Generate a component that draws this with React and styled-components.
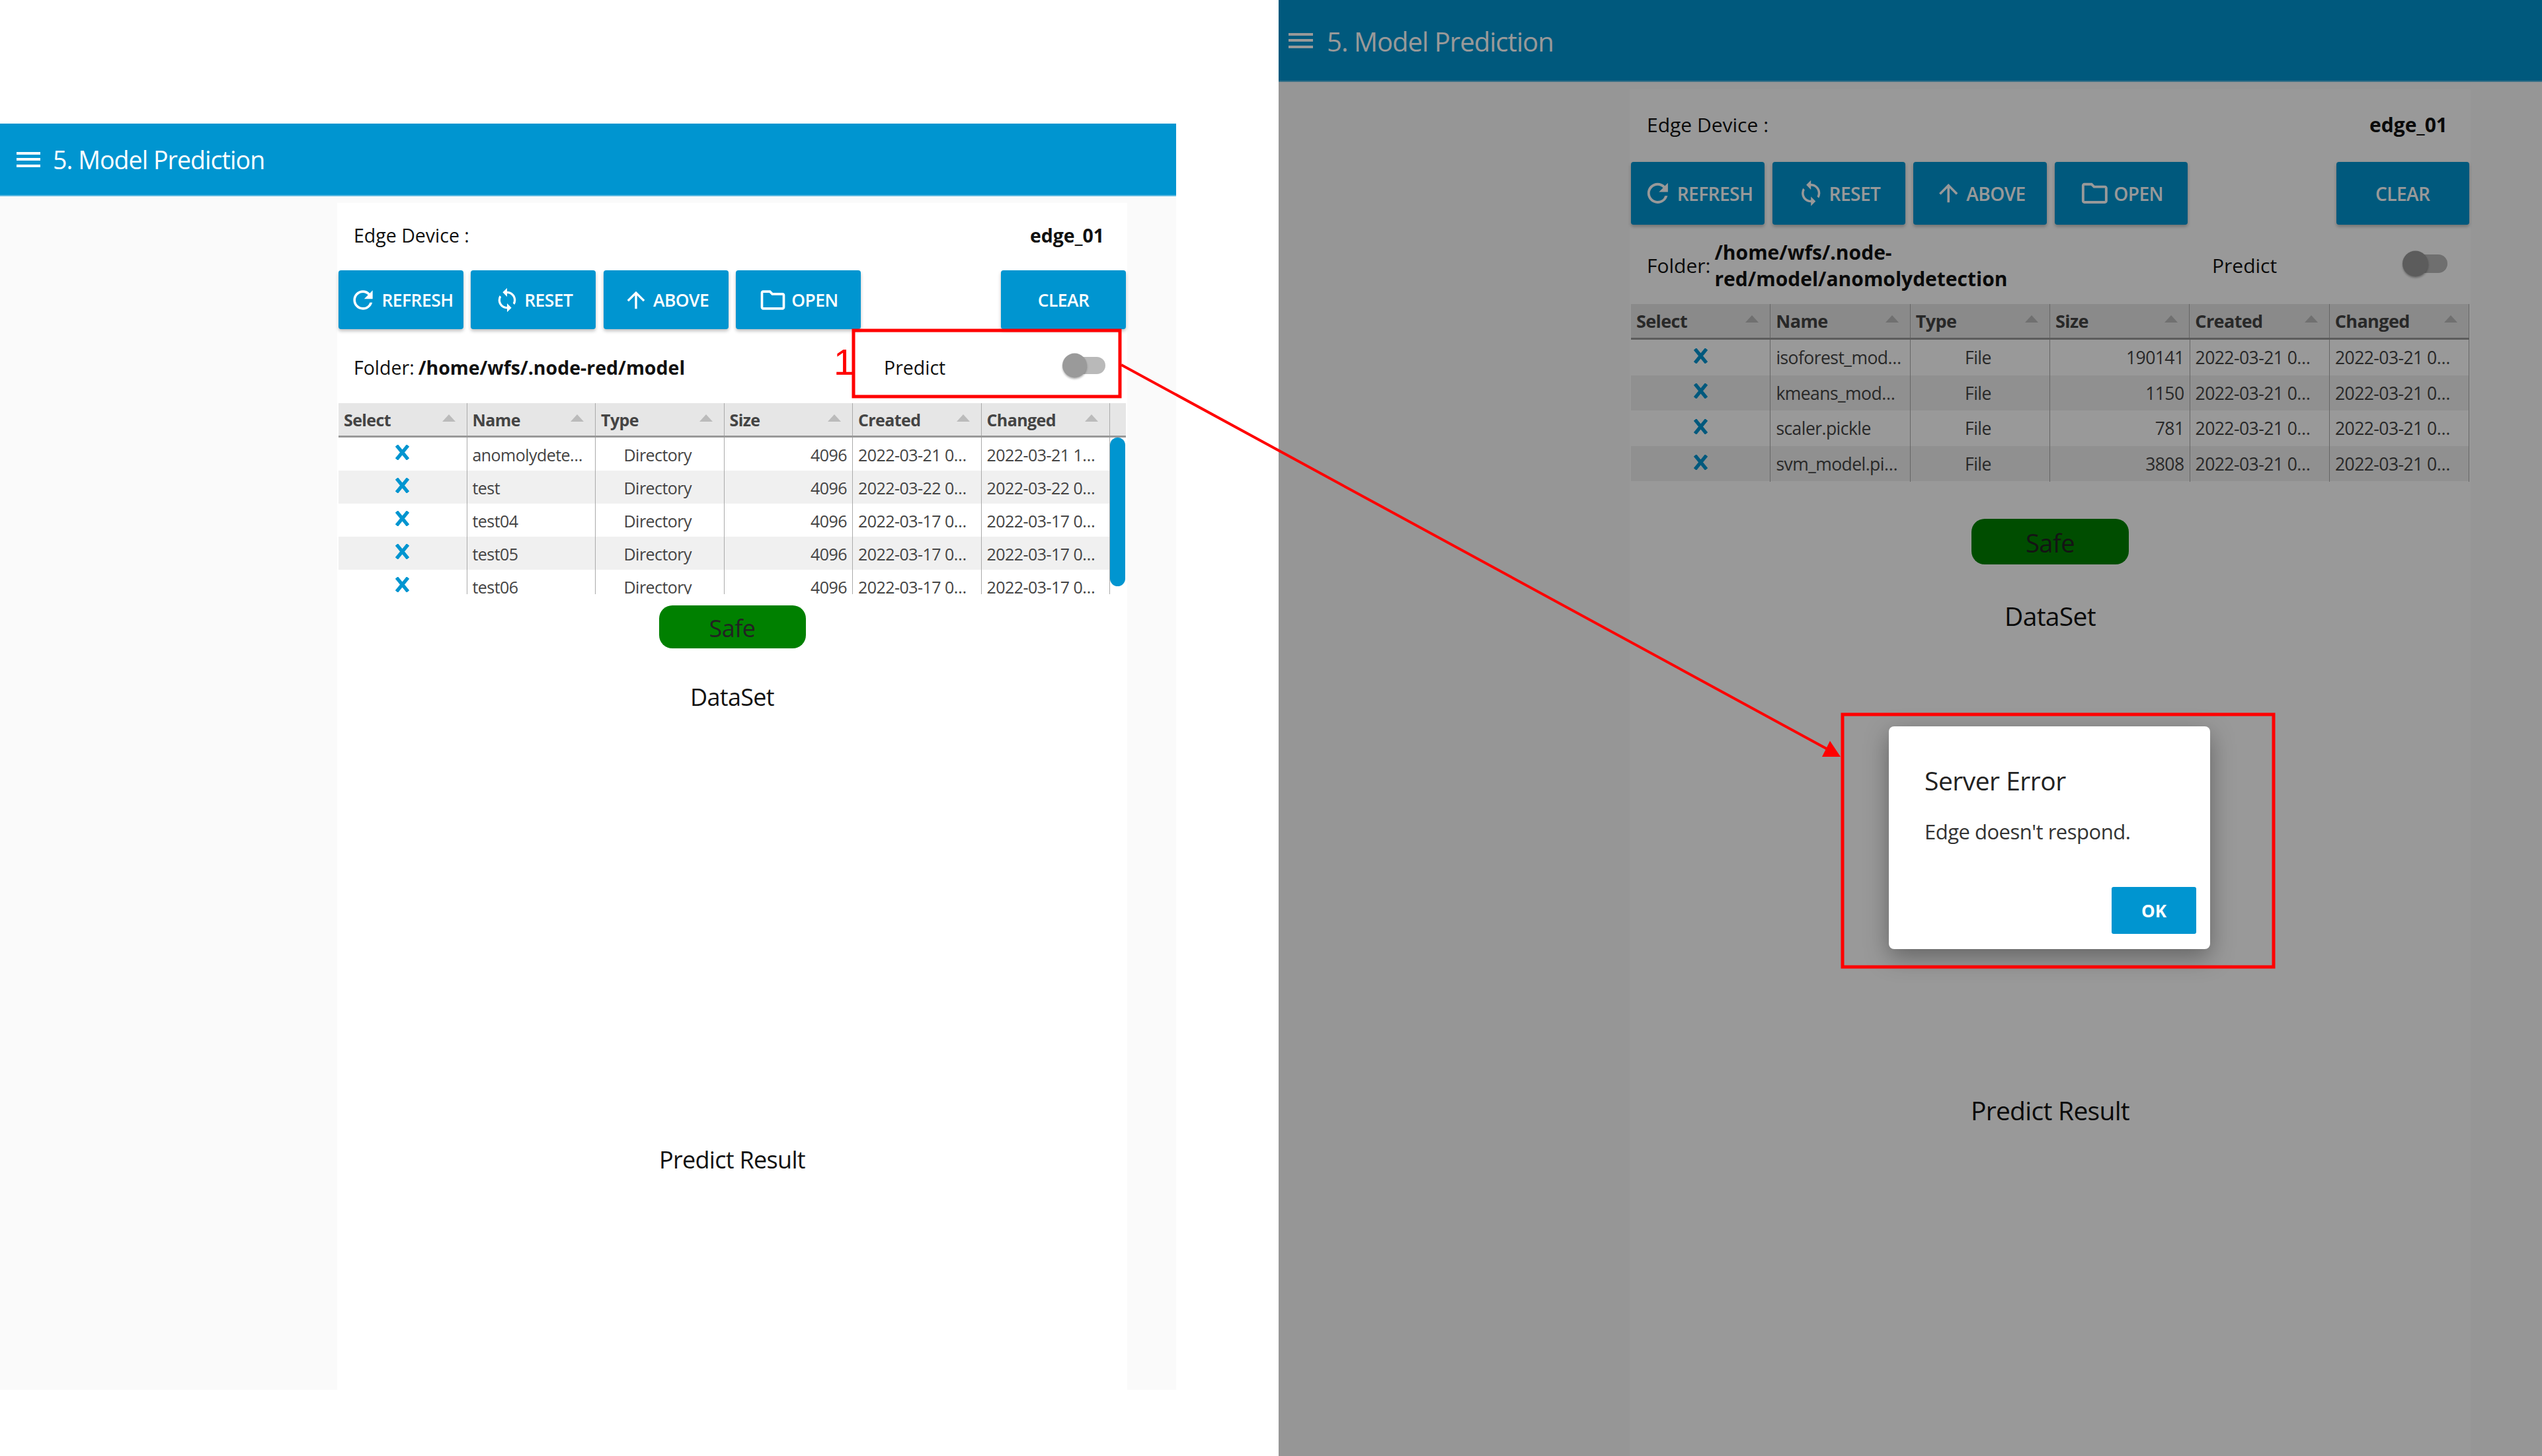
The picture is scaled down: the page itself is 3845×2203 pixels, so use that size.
import React from 'react';
import styled, { createGlobalStyle, ThemeProvider } from 'styled-components';
import { MdRefresh, MdSync, MdArrowUpward, MdOutlineFolder } from 'react-icons/md';

const FONT = '"Open Sans", "Noto Sans", sans-serif';

const leftTheme = {
  headerH: 110, headerPad: 25, titleGap: 19, title: 37.5, titleTop: 0, burger: 36,
  padLeft: 510, padRight: 74, sheetTop: 10,
  edgeH: 102, edgePad: 25, edgeRight: 35, text: 28.5,
  btnH: 89, btnW: 189, btnGap: 11.3, btnFont: 26.4,
  folderH: 112, predictPad: 33, folderW: 802,
  headH: 50, rowH: 50, cols: 194.5, scroll: 23, bodyH: 237, cellFont: 25, headFont: 25,
  safeTop: 17, safeW: 222, safeH: 65, safeFont: 36, dataTop: 52, big: 36, resultTop: 656,
  thumb: 37, trackW: 57, trackH: 26,
};

const rightTheme = {
  headerH: 124, headerPad: 15, titleGap: 21, title: 40, titleTop: 3, burger: 37,
  padLeft: 531, padRight: 108, sheetTop: 11,
  edgeH: 110, edgePad: 26, edgeRight: 35, text: 30,
  btnH: 95, btnW: 201.5, btnGap: 12, btnFont: 28,
  folderH: 120, predictPad: 35, folderW: 855,
  headH: 52, rowH: 53.6, cols: 211.4, scroll: 0, bodyH: 215, cellFont: 26.5, headFont: 27,
  safeTop: 56, safeW: 238, safeH: 69, safeFont: 38, dataTop: 56, big: 39, resultTop: 704,
  thumb: 39, trackW: 60, trackH: 28,
};

const GlobalStyle = createGlobalStyle`
  html, body { margin: 0; padding: 0; background: #fff; }
  body { font-family: ${FONT}; color: #111; }
  * { box-sizing: border-box; }
`;

const Page = styled.div`
  position: relative;
  width: 3845px;
  height: 2203px;
  display: flex;
  overflow: hidden;
  background: #fff;
`;

const LeftArea = styled.div`
  width: 1934px;
  padding-top: 187px;
`;

const LeftFrame = styled.div`
  width: 1779px;
  height: 1916px;
`;

const RightArea = styled.div`
  position: relative;
  width: 1911px;
  height: 2203px;
  overflow: hidden;
`;

const Screen = styled.div`
  display: flex;
  flex-direction: column;
  height: 100%;
  background: #fafafa;
`;

const Header = styled.header`
  flex: none;
  height: ${(p) => p.theme.headerH}px;
  display: flex;
  align-items: center;
  padding-left: ${(p) => p.theme.headerPad}px;
  gap: ${(p) => p.theme.titleGap}px;
  background: #0095d0;
  border-bottom: 2px solid #5db9e0;
  color: #fff;
`;

const Burger = styled.span`
  width: ${(p) => p.theme.burger}px;
  height: 23px;
  border-top: 4px solid #fff;
  border-bottom: 4px solid #fff;
  position: relative;
  &::after {
    content: '';
    position: absolute;
    left: 0;
    right: 0;
    top: 5.5px;
    height: 4px;
    background: #fff;
  }
`;

const Title = styled.span`
  padding-top: ${(p) => p.theme.titleTop}px;
  font-size: ${(p) => p.theme.title}px;
  letter-spacing: -0.95px;
`;

const Main = styled.main`
  flex: 1;
  display: flex;
  padding: ${(p) => p.theme.sheetTop}px ${(p) => p.theme.padRight}px 0 ${(p) => p.theme.padLeft}px;
`;

const Sheet = styled.div`
  flex: 1;
  min-width: 0;
  display: flex;
  flex-direction: column;
  background: #fff;
`;

const EdgeRow = styled.div`
  flex: none;
  height: ${(p) => p.theme.edgeH}px;
  display: flex;
  align-items: center;
  justify-content: space-between;
  padding: 0 ${(p) => p.theme.edgeRight}px 4px ${(p) => p.theme.edgePad}px;
  font-size: ${(p) => p.theme.text}px;
`;

const Strong = styled.b`
  font-weight: 700;
`;

const Toolbar = styled.div`
  flex: none;
  display: flex;
  gap: ${(p) => p.theme.btnGap}px;
  padding: 0 2px;
`;

const Button = styled.button`
  width: ${(p) => p.theme.btnW}px;
  height: ${(p) => p.theme.btnH}px;
  margin-left: ${(p) => (p.$push ? 'auto' : '0')};
  display: flex;
  align-items: center;
  justify-content: center;
  gap: 6px;
  padding: 0;
  border: 0;
  border-radius: 4px;
  background: #0095d0;
  color: #fff;
  font-family: ${FONT};
  font-weight: 600;
  font-size: ${(p) => p.theme.btnFont}px;
  letter-spacing: -0.5px;
  box-shadow: 0 3px 5px rgba(0, 0, 0, 0.25);
  svg {
    flex: none;
  }
`;

const FolderRow = styled.div`
  flex: none;
  height: ${(p) => p.theme.folderH}px;
  display: flex;
  align-items: center;
  padding-top: 3px;
  padding-left: ${(p) => p.theme.edgePad}px;
  padding-right: ${(p) => p.theme.predictPad}px;
  font-size: ${(p) => p.theme.text}px;
`;

const Folder = styled.div`
  flex: none;
  width: ${(p) => p.theme.folderW}px;
  display: flex;
  align-items: center;
  gap: 6px;
`;

const PathLine = styled.b`
  display: block;
  font-weight: 700;
  line-height: 40px;
  white-space: nowrap;
`;

const Predict = styled.div`
  flex: 1;
  display: flex;
  align-items: center;
  justify-content: space-between;
`;

const Toggle = styled.span`
  position: relative;
  display: block;
  width: ${(p) => p.theme.trackW}px;
  height: ${(p) => p.theme.trackH}px;
  border-radius: 14px;
  background: #b9b9b9;
  margin-top: -6px;
  &::before {
    content: '';
    position: absolute;
    left: -8px;
    top: 50%;
    width: ${(p) => p.theme.thumb}px;
    height: ${(p) => p.theme.thumb}px;
    transform: translateY(-50%);
    border-radius: 50%;
    background: #9a9a9a;
    box-shadow: 0 2px 3px rgba(0, 0, 0, 0.3);
  }
`;

const Table = styled.div`
  flex: none;
  padding: 0 2px;
`;

const HeadRow = styled.div`
  display: flex;
  height: ${(p) => p.theme.headH + 2}px;
  background: #e6e6e6;
  border-bottom: 3px solid #999;
`;

const HeadCell = styled.div`
  position: relative;
  width: ${(p) => p.theme.cols}px;
  display: flex;
  align-items: center;
  padding-left: 8px;
  border-right: 1.5px solid #aaa;
  color: #444;
  font-weight: 700;
  font-size: ${(p) => p.theme.headFont}px;
  letter-spacing: -0.6px;
  &::after {
    content: '';
    position: absolute;
    right: 17px;
    top: 17px;
    border-left: 10px solid transparent;
    border-right: 10px solid transparent;
    border-bottom: 11px solid #bbb;
  }
`;

const Gutter = styled.div`
  width: ${(p) => p.theme.scroll}px;
`;

const BodyFrame = styled.div`
  display: flex;
  height: ${(p) => p.theme.bodyH}px;
  overflow: hidden;
`;

const Rows = styled.div`
  flex: none;
`;

const Row = styled.div`
  display: flex;
  height: ${(p) => p.theme.rowH}px;
  background: ${(p) => (p.$odd ? '#f0f0f0' : '#fff')};
`;

const cellPad = { left: 18, center: 14, right: 8 };

const Cell = styled.div`
  width: ${(p) => p.theme.cols}px;
  height: ${(p) => p.theme.rowH + 1}px;
  padding: 0 ${(p) => cellPad[p.$align || 'left']}px 0 8px;
  border-right: 1.5px solid #aaa;
  color: #444;
  font-size: ${(p) => p.theme.cellFont}px;
  line-height: ${(p) => p.theme.rowH + 2}px;
  letter-spacing: -0.55px;
  text-align: ${(p) => p.$align || 'left'};
  white-space: nowrap;
  overflow: hidden;
  text-overflow: ellipsis;
`;

const NameCell = styled(Cell)`
  padding-right: 12px;
`;

const SelectCell = styled(Cell)`
  display: flex;
  align-items: center;
  justify-content: center;
  padding: 0 0 6px;
`;

const RemoveIcon = styled.svg`
  width: 25px;
  height: 23px;
  stroke: #0095d0;
  stroke-width: 5.5;
  fill: none;
`;

const Scrollbar = styled.div`
  flex: none;
  width: ${(p) => p.theme.scroll}px;
  height: 225px;
  border-radius: 12px;
  background: #0095d0;
`;

const Safe = styled.div`
  flex: none;
  align-self: center;
  width: ${(p) => p.theme.safeW}px;
  height: ${(p) => p.theme.safeH}px;
  margin-top: ${(p) => p.theme.safeTop}px;
  padding-top: 3px;
  display: flex;
  align-items: center;
  justify-content: center;
  border-radius: 20px;
  background: #008000;
  color: #222;
  font-size: ${(p) => p.theme.safeFont}px;
  letter-spacing: -0.5px;
`;

const Caption = styled.div`
  flex: none;
  text-align: center;
  margin-top: ${(p) => (p.$result ? p.theme.resultTop : p.theme.dataTop)}px;
  font-size: ${(p) => p.theme.big}px;
  font-weight: 500;
  letter-spacing: -0.7px;
  line-height: 44px;
`;

const Overlay = styled.div`
  position: absolute;
  inset: 0;
  padding: 1099px 0 0 923px;
  background: rgba(0, 0, 0, 0.4);
`;

const Dialog = styled.div`
  width: 486px;
  height: 337px;
  display: flex;
  flex-direction: column;
  padding: 58px 21px 23px 54px;
  border-radius: 8px;
  background: #fff;
  box-shadow: 0 12px 36px rgba(0, 0, 0, 0.35);
`;

const DialogTitle = styled.div`
  font-size: 39px;
  font-weight: 500;
  letter-spacing: -0.5px;
  line-height: 48px;
  color: #222;
`;

const DialogText = styled.div`
  margin-top: 33px;
  font-size: 31px;
  letter-spacing: -0.5px;
  line-height: 40px;
  color: #333;
`;

const OkButton = styled.button`
  align-self: flex-end;
  margin-top: auto;
  width: 128px;
  height: 71px;
  border: 0;
  border-radius: 3px;
  background: #0095d0;
  color: #fff;
  font-family: ${FONT};
  font-weight: 700;
  font-size: 26px;
`;

const Annotations = styled.svg`
  position: absolute;
  inset: 0;
  pointer-events: none;
`;

const Marker = styled.span`
  position: absolute;
  left: 1261px;
  top: 516px;
  color: #ff0000;
  font-family: "Liberation Sans", sans-serif;
  font-size: 56px;
  line-height: 64px;
`;

const columns = ['Select', 'Name', 'Type', 'Size', 'Created', 'Changed'];

const directories = [
  { name: 'anomolydetection', type: 'Directory', size: 4096, created: '2022-03-21 09:12:44', changed: '2022-03-21 16:03:20' },
  { name: 'test', type: 'Directory', size: 4096, created: '2022-03-22 09:31:02', changed: '2022-03-22 09:31:02' },
  { name: 'test04', type: 'Directory', size: 4096, created: '2022-03-17 09:20:11', changed: '2022-03-17 09:20:11' },
  { name: 'test05', type: 'Directory', size: 4096, created: '2022-03-17 09:24:38', changed: '2022-03-17 09:24:38' },
  { name: 'test06', type: 'Directory', size: 4096, created: '2022-03-17 09:28:50', changed: '2022-03-17 09:28:50' },
];

const models = [
  { name: 'isoforest_model.pickle', type: 'File', size: 190141, created: '2022-03-21 09:12:44', changed: '2022-03-21 09:12:44' },
  { name: 'kmeans_model.pickle', type: 'File', size: 1150, created: '2022-03-21 09:12:44', changed: '2022-03-21 09:12:44' },
  { name: 'scaler.pickle', type: 'File', size: 781, created: '2022-03-21 09:12:44', changed: '2022-03-21 09:12:44' },
  { name: 'svm_model.pickle', type: 'File', size: 3808, created: '2022-03-21 09:12:44', changed: '2022-03-21 09:12:44' },
];

const ModelPrediction = ({ path, files, scrollable }) => (
  <Screen>
    <Header>
      <Burger />
      <Title>5. Model Prediction</Title>
    </Header>
    <Main>
      <Sheet>
        <EdgeRow>
          <span>Edge Device :</span>
          <Strong>edge_01</Strong>
        </EdgeRow>
        <Toolbar>
          <Button><MdRefresh size="1.667em" />REFRESH</Button>
          <Button><MdSync size="1.515em" />RESET</Button>
          <Button><MdArrowUpward size="1.515em" />ABOVE</Button>
          <Button><MdOutlineFolder size="1.667em" />OPEN</Button>
          <Button $push>CLEAR</Button>
        </Toolbar>
        <FolderRow>
          <Folder>
            <span>Folder:</span>
            <div>
              {path.map((line) => <PathLine key={line}>{line}</PathLine>)}
            </div>
          </Folder>
          <Predict>
            <span>Predict</span>
            <Toggle />
          </Predict>
        </FolderRow>
        <Table>
          <HeadRow>
            {columns.map((col) => <HeadCell key={col}>{col}</HeadCell>)}
            {scrollable && <Gutter />}
          </HeadRow>
          <BodyFrame>
            <Rows>
              {files.map((file, i) => (
                <Row key={file.name} $odd={i % 2 === 1}>
                  <SelectCell>
                    <RemoveIcon viewBox="0 0 24 24"><path d="M3 1 L21 23 M21 1 L3 23" /></RemoveIcon>
                  </SelectCell>
                  <NameCell>{file.name}</NameCell>
                  <Cell $align="center">{file.type}</Cell>
                  <Cell $align="right">{file.size}</Cell>
                  <Cell>{file.created}</Cell>
                  <Cell>{file.changed}</Cell>
                </Row>
              ))}
            </Rows>
            {scrollable && <Scrollbar />}
          </BodyFrame>
        </Table>
        <Safe>Safe</Safe>
        <Caption>DataSet</Caption>
        <Caption $result>Predict Result</Caption>
      </Sheet>
    </Main>
  </Screen>
);

const App = () => (
  <Page>
    <GlobalStyle />
    <LeftArea>
      <LeftFrame>
        <ThemeProvider theme={leftTheme}>
          <ModelPrediction path={['/home/wfs/.node-red/model']} files={directories} scrollable />
        </ThemeProvider>
      </LeftFrame>
    </LeftArea>
    <RightArea>
      <ThemeProvider theme={rightTheme}>
        <ModelPrediction path={['/home/wfs/.node-', 'red/model/anomolydetection']} files={models} />
      </ThemeProvider>
      <Overlay>
        <Dialog>
          <DialogTitle>Server Error</DialogTitle>
          <DialogText>Edge doesn't respond.</DialogText>
          <OkButton>OK</OkButton>
        </Dialog>
      </Overlay>
    </RightArea>
    <Annotations width="3845" height="2203" viewBox="0 0 3845 2203">
      <rect x="1291" y="500" width="403" height="100" fill="none" stroke="#ff0000" strokeWidth="5" />
      <rect x="2787" y="1081" width="652" height="382" fill="none" stroke="#ff0000" strokeWidth="5" />
      <line x1="1696" y1="552" x2="2765" y2="1134" stroke="#ff0000" strokeWidth="4" />
      <polygon points="2784,1145 2756,1145 2768,1121" fill="#ff0000" />
    </Annotations>
    <Marker>1</Marker>
  </Page>
);

export default App;
